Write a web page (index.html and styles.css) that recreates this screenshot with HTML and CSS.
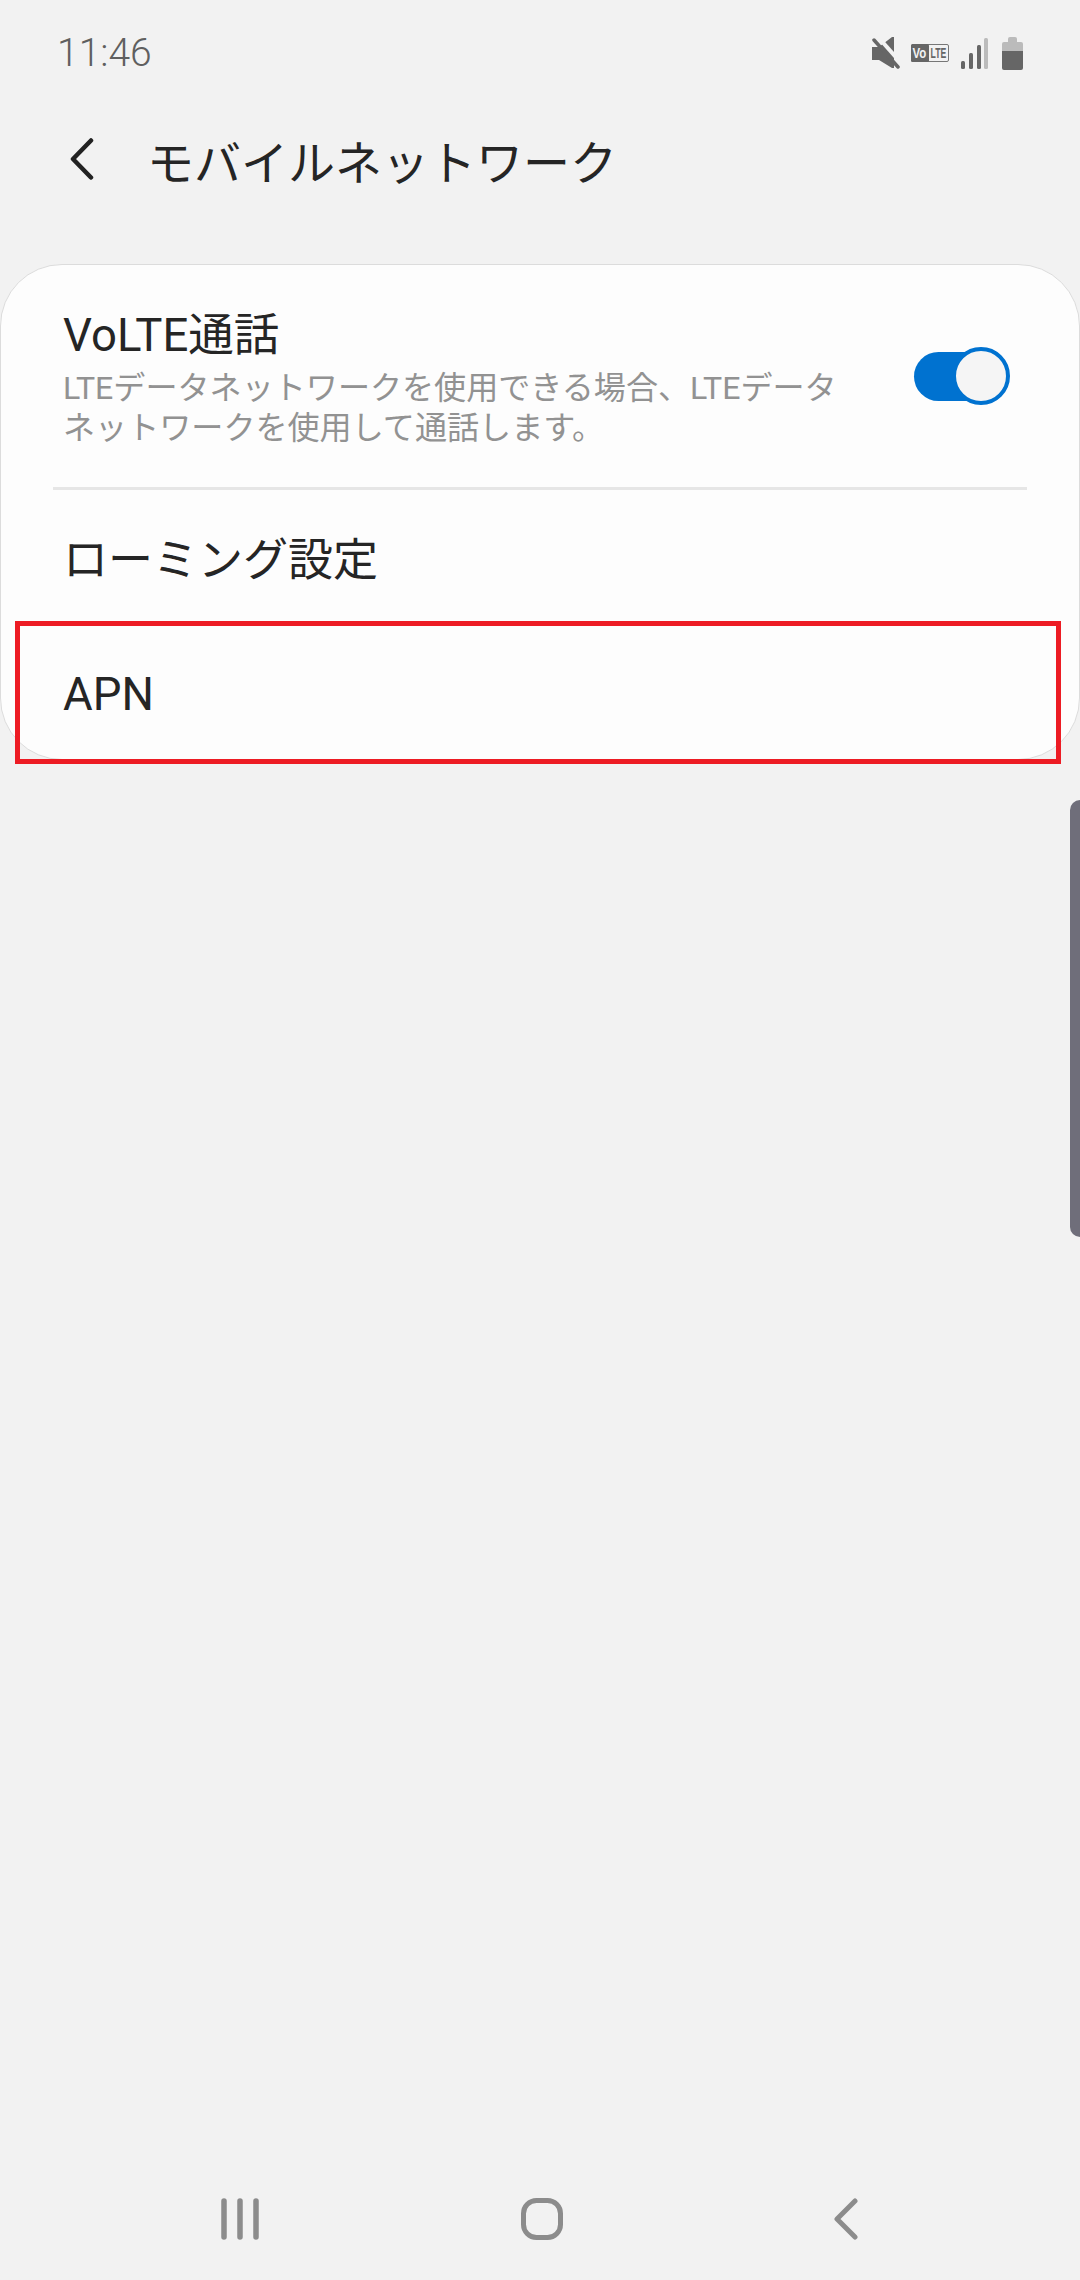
FILE: index.html
```html
<!DOCTYPE html>
<html lang="ja">
<head>
  <meta charset="UTF-8" />
  <title>モバイルネットワーク</title>
  <link rel="stylesheet" href="styles.css">
</head>
<body>
  <div class="status-bar">
    <span class="time">11:46</span>
    <div class="status-icons">
      <svg class="icon-mute" width="28" height="32" viewBox="0 0 28 32">
        <path d="M0 10h7l13-10h2v31h-2L7 23H0z" fill="#666"/>
        <path d="M6 0l23 26" stroke="#f2f2f2" stroke-width="4"/>
        <path d="M2 3l24 27" stroke="#666" stroke-width="3.5" stroke-linecap="round"/>
      </svg>
      <svg class="icon-volte" width="38" height="18" viewBox="0 0 38 18">
        <rect x="0.5" y="0.5" width="37" height="17" rx="1.5" fill="#f2f2f2" stroke="#777"/>
        <rect x="0" y="0" width="18" height="18" rx="1.5" fill="#666"/>
        <text transform="translate(1.5 14) scale(.82 1)" class="volte-vo">Vo</text>
        <text transform="translate(19.5 14) scale(.62 1)" class="volte-lte">LTE</text>
      </svg>
      <svg class="icon-signal" width="27" height="31" viewBox="0 0 27 31">
        <rect x="0" y="23" width="4" height="8" rx="1.5" fill="#666"/>
        <rect x="8" y="15" width="4" height="16" rx="1.5" fill="#666"/>
        <rect x="16" y="7" width="4" height="24" rx="1.5" fill="#666"/>
        <rect x="23" y="0" width="4" height="31" rx="1.5" fill="#bbb"/>
      </svg>
      <svg class="icon-battery" width="21" height="33" viewBox="0 0 21 33">
        <path d="M6 2a2 2 0 0 1 2-2h5a2 2 0 0 1 2 2v3H6z" fill="#bbb"/>
        <path d="M0 7a2 2 0 0 1 2-2h17a2 2 0 0 1 2 2v7H0z" fill="#bbb"/>
        <path d="M0 14h21v17a2 2 0 0 1-2 2H2a2 2 0 0 1-2-2z" fill="#666"/>
      </svg>
    </div>
  </div>

  <div class="app-bar">
    <svg class="back" width="24" height="42" viewBox="0 0 24 42">
      <path d="M21 2.5L3 21l18 18.5" fill="none" stroke="#222" stroke-width="4.5" stroke-linecap="round" stroke-linejoin="round"/>
    </svg>
    <h1>モバイルネットワーク</h1>
  </div>

  <div class="card">
    <div class="row row-switch">
      <div class="row-text">
        <div class="row-title">VoLTE通話</div>
        <div class="row-sub">LTEデータネットワークを使用できる場合、LTEデータネットワークを使用して通話します。</div>
      </div>
      <div class="switch"><span class="thumb"></span></div>
    </div>
    <div class="divider"></div>
    <div class="row row-plain">
      <div class="row-title row-title-ja">ローミング設定</div>
    </div>
    <div class="row row-plain row-apn">
      <div class="row-title">APN</div>
      <div class="highlight"></div>
    </div>
  </div>

  <div class="scroll-handle"></div>

  <div class="nav-bar">
    <svg width="38" height="42" viewBox="0 0 38 42">
      <path d="M3 3v36M19 3v36M35 3v36" fill="none" stroke="#8c8c8c" stroke-width="5.5" stroke-linecap="round"/>
    </svg>
    <svg class="nav-home" width="42" height="42" viewBox="0 0 42 42">
      <rect x="2.5" y="2.5" width="37" height="37" rx="13" fill="none" stroke="#8c8c8c" stroke-width="5"/>
    </svg>
    <svg class="nav-back" width="26" height="42" viewBox="0 0 26 42">
      <path d="M22 3L4 21l18 18" fill="none" stroke="#8c8c8c" stroke-width="5" stroke-linecap="round" stroke-linejoin="round"/>
    </svg>
  </div>
</body>
</html>
```

FILE: styles.css
```css
html, body {
  margin: 0;
  padding: 0;
}

body {
  position: relative;
  width: 1080px;
  height: 2280px;
  overflow: hidden;
  display: flex;
  flex-direction: column;
  background: #f2f2f2;
  color: #252525;
  font-family: Roboto, "Noto Sans CJK JP", sans-serif;
}

.status-bar {
  display: flex;
  justify-content: space-between;
  align-items: center;
  padding: 18px 57px 0 57px;
  box-sizing: border-box;
  height: 88px;
}

.time {
  font-size: 39px;
  font-weight: 300;
  color: #5f5f5f;
}

.status-icons {
  display: flex;
  align-items: center;
  gap: 11px;
}

.icon-signal {
  margin-left: 1px;
}

.icon-battery {
  margin-left: 3px;
}

.volte-vo,
.volte-lte {
  font-family: "Liberation Sans", sans-serif;
  font-size: 14px;
  font-weight: 700;
}

.volte-vo {
  fill: #f2f2f2;
}

.volte-lte {
  fill: #666;
}

.app-bar {
  display: flex;
  align-items: center;
  height: 142px;
  padding-left: 70px;
}

.app-bar h1 {
  margin: 0 0 0 53px;
  font-size: 47px;
  font-weight: 400;
}

.card {
  height: 496px;
  margin-top: 34px;
  box-sizing: border-box;
  background: #fdfdfd;
  border: 1px solid #dcdcdc;
  border-radius: 62px;
}

.row {
  display: flex;
  align-items: center;
  padding: 0 79px 0 62px;
}

.row-switch {
  justify-content: space-between;
  height: 222px;
}

.row-text {
  width: 791px;
  padding-top: 4px;
}

.row-title {
  font-size: 45.5px;
  line-height: 56px;
}

.row-title-ja {
  font-size: 45px;
}

.row-sub {
  margin-top: 4px;
  font-size: 32.1px;
  line-height: 40px;
  color: #929292;
}

.row-plain {
  height: 136px;
  box-sizing: border-box;
  padding-top: 5px;
}

.row-apn {
  position: relative;
  padding-top: 2px;
}

.divider {
  height: 3px;
  margin: 0 52px;
  background: #e6e6e6;
}

.switch {
  position: relative;
  width: 86px;
  height: 49px;
  border-radius: 25px;
  background: #0072d0;
}

.thumb {
  position: absolute;
  top: -5px;
  right: -10px;
  width: 58px;
  height: 58px;
  box-sizing: border-box;
  border: 4px solid #0072d0;
  border-radius: 50%;
  background: #f5f5f5;
}

.highlight {
  position: absolute;
  top: -5px;
  left: 14px;
  width: 1046px;
  height: 143px;
  box-sizing: border-box;
  border: 5px solid #ed1c24;
}

.scroll-handle {
  position: absolute;
  top: 800px;
  right: 0;
  width: 10px;
  height: 437px;
  border-radius: 10px 0 0 10px;
  background: #6f6e7a;
}

.nav-bar {
  display: flex;
  margin-top: auto;
  padding: 0 0 40px 221px;
}

.nav-bar svg {
  display: block;
}

.nav-home {
  margin-left: 262px;
}

.nav-back {
  margin-left: 270px;
}
```
